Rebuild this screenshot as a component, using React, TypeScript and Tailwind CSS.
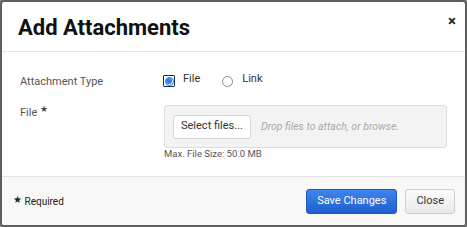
import React from "react";

export default function App() {
  return (
    <div className="w-[467px] h-[227px] bg-[#8a8a8a] font-['Roboto',sans-serif]">
      <div className="w-full h-full border-2 border-[#5e5e5e] rounded-[4px] bg-white flex flex-col overflow-hidden">
        <div className="h-[50px] flex items-start justify-between border-b border-[#e6e6e6] pl-[16px] pr-[9px]">
          <h1 className="text-[22px] leading-none font-bold text-[#111] mt-[15px]">Add Attachments</h1>
          <button className="mt-[12px] text-[15px] font-bold leading-none text-[#222]">×</button>
        </div>

        <div className="flex-1 pl-[18px] pr-[18px] pt-[21px]">
          <div className="flex items-center h-[16px]">
            <div className="w-[143px] text-[11px] text-[#555] pt-[3px]">Attachment Type</div>
            <label className="flex items-center gap-[8px]">
              <span className="w-[12px] h-[12px] rounded-[1px] border-[1.5px] border-[#1b2d52] flex items-center justify-center bg-white">
                <span className="w-[9px] h-[9px] rounded-full border border-[#1f6fd8] flex items-center justify-center bg-white">
                  <span className="w-[6px] h-[6px] rounded-full bg-[#2b83f0]" />
                </span>
              </span>
              <span className="relative -top-[2px] text-[11px] text-[#333]">File</span>
            </label>
            <label className="flex items-center gap-[9px] ml-[22px]">
              <span className="w-[11px] h-[11px] rounded-full border border-[#888] bg-white" />
              <span className="relative -top-[2px] text-[11px] text-[#333]">Link</span>
            </label>
          </div>

          <div className="flex mt-[16px]">
            <div className="w-[144px] text-[11px] text-[#555]">
              File <span className="relative -top-[4px] text-[9px] text-[#444] leading-none">★</span>
            </div>
            <div className="flex flex-col">
              <div className="w-[283px] h-[43px] bg-[#f3f3f3] border border-[#dcdcdc] rounded-[3px] flex items-center pl-[8px]">
                <button className="h-[24px] px-[7px] bg-white border border-[#d5d5d5] rounded-[3px] text-[11px] text-[#333]">
                  Select files...
                </button>
                <span className="ml-[10px] text-[10.5px] italic text-[#aaa]">Drop files to attach, or browse.</span>
              </div>
              <div className="text-[9.5px] leading-[12px] text-[#555]">Max. File Size: 50.0 MB</div>
            </div>
          </div>
        </div>

        <div className="h-[49px] border-t border-[#e3e3e3] bg-[#f8f8f8] flex items-center justify-between pl-[11px] pr-[10px]">
          <div className="text-[10px] text-[#222]">
            <span className="relative -top-[2px] text-[10px] leading-none">★</span> Required
          </div>
          <div className="flex gap-[8px]">
            <button className="h-[25px] px-[10px] rounded-[3px] text-[11px] text-white bg-gradient-to-b from-[#3d86ec] to-[#1e5fcf] border border-[#1d58c0]">
              Save Changes
            </button>
            <button className="h-[25px] px-[10px] rounded-[3px] text-[11px] text-[#333] bg-gradient-to-b from-[#fbfbfb] to-[#e9e9e9] border border-[#cfcfcf]">
              Close
            </button>
          </div>
        </div>
      </div>
    </div>
  );
}
